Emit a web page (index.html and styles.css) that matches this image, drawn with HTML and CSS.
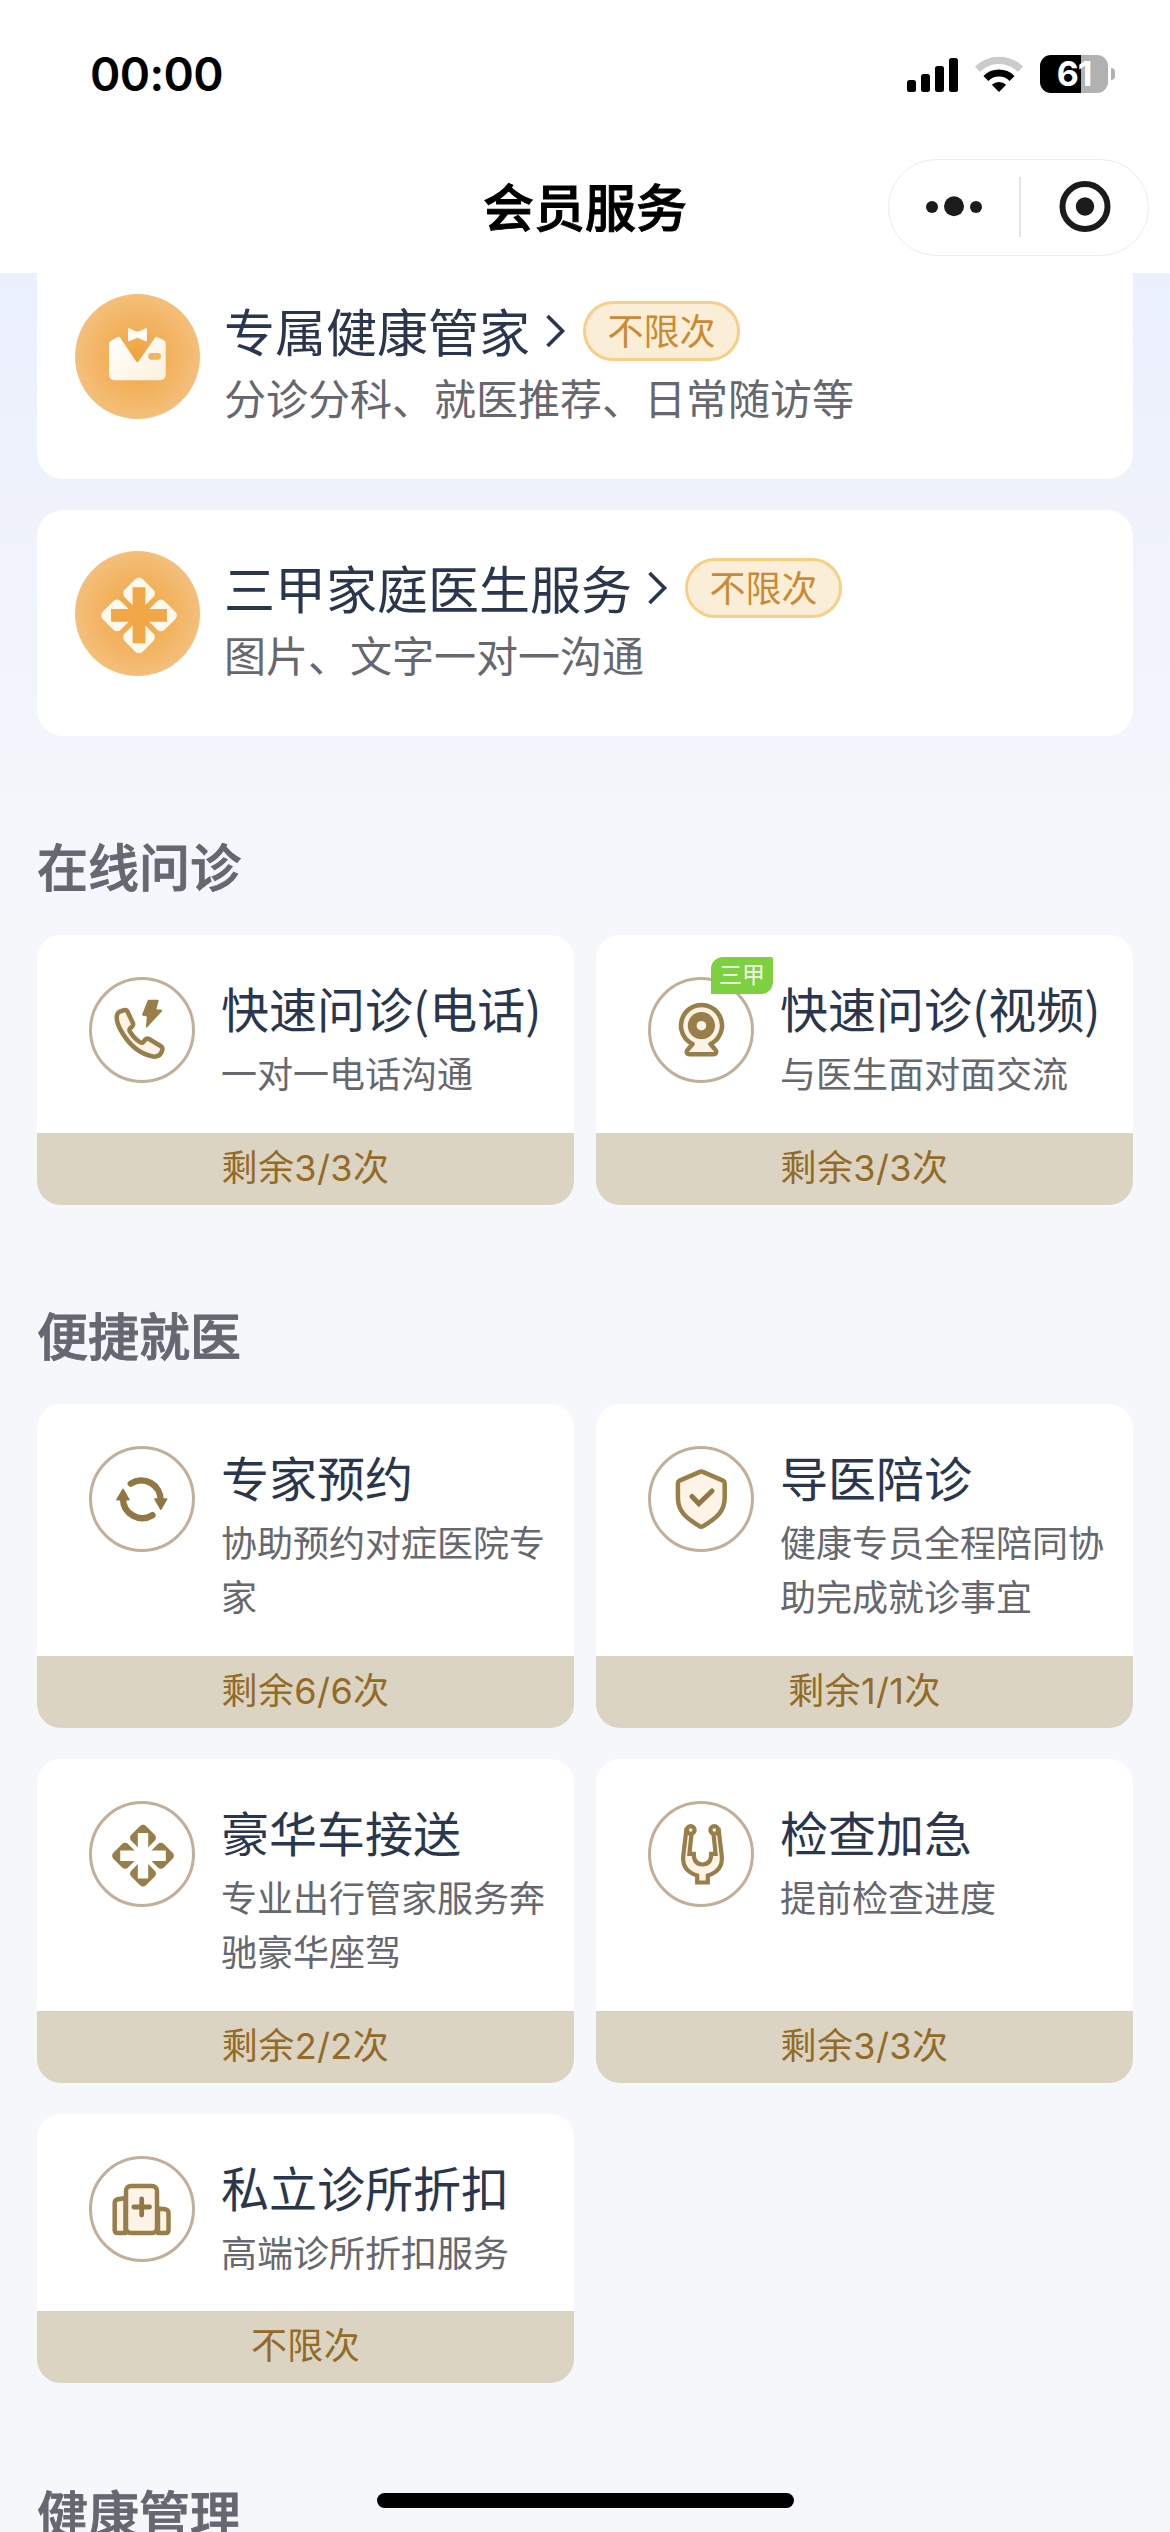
FILE: index.html
```html
<!DOCTYPE html>
<html lang="zh-CN">
<head>
<meta charset="utf-8">
<title>会员服务</title>
<link rel="stylesheet" href="styles.css">
</head>
<body>
<svg class="defs" width="0" height="0" aria-hidden="true">
  <defs>
    <linearGradient id="cream" x1="0" y1="0" x2="1" y2="1">
      <stop offset="0" stop-color="#ffffff"/>
      <stop offset="1" stop-color="#fdf0dc"/>
    </linearGradient>
    <g id="petals">
      <rect x="-10.4" y="-10.4" width="20.8" height="20.8" rx="4.2" transform="translate(0 -17.9) rotate(45)"/>
      <rect x="-10.4" y="-10.4" width="20.8" height="20.8" rx="4.2" transform="translate(0 17.9) rotate(45)"/>
      <rect x="-10.4" y="-10.4" width="20.8" height="20.8" rx="4.2" transform="translate(-17.9 0) rotate(45)"/>
      <rect x="-10.4" y="-10.4" width="20.8" height="20.8" rx="4.2" transform="translate(17.9 0) rotate(45)"/>
    </g>
    <path id="cross" d="M-5.2-22.8H5.2V-5.2H22.8V5.2H5.2V22.8H-5.2V5.2H-22.8V-5.2H-5.2Z"/>
    <radialGradient id="amber">
      <stop offset="0" stop-color="#f0a33d"/>
      <stop offset="1" stop-color="#f4bf7b"/>
    </radialGradient>
  </defs>
</svg>
<div class="page">
  <header class="header">
    <div class="status">
      <span class="time">00:00</span>
      <div class="status-icons">
        <svg width="51" height="36" viewBox="0 0 51 36">
          <rect x="0" y="24" width="9" height="12" rx="2.5"/>
          <rect x="14" y="18" width="9" height="18" rx="2.5"/>
          <rect x="28" y="10" width="9" height="26" rx="2.5"/>
          <rect x="42" y="2" width="9" height="34" rx="2.5"/>
        </svg>
        <svg width="48" height="36" viewBox="0 0 48 36">
          <path d="M2.5 13.2A30.5 30.5 0 0 1 45.5 13.2" fill="none" stroke="#cbcbcb" stroke-width="7.4"/>
          <path d="M10.9 22.4A18.6 18.6 0 0 1 37.1 22.4" fill="none" stroke="#000" stroke-width="7"/>
          <path d="M24 36L16.8 28.8A10.4 10.4 0 0 1 31.2 28.8Z"/>
        </svg>
        <div class="battery">
          <div class="battery-body">61</div>
          <div class="battery-cap"></div>
        </div>
      </div>
    </div>
    <div class="nav">
      <h1 class="nav-title">会员服务</h1>
      <div class="capsule">
        <svg width="130" height="94" viewBox="0 0 130 94">
          <circle cx="43" cy="47" r="6"/><circle cx="65" cy="46.300" r="10"/><circle cx="87" cy="47" r="6"/>
        </svg>
        <div class="capsule-line"></div>
        <svg width="127" height="94" viewBox="0 0 127 94">
          <circle cx="64" cy="46.500" r="22.500" fill="none" stroke="#1b1b1b" stroke-width="6"/><circle cx="64" cy="46.500" r="9.200"/>
        </svg>
      </div>
    </div>
  </header>

  <main class="content">
    <section class="features">
      <article class="feature">
        <svg class="feature-icon" viewBox="0 0 125 125">
          <circle cx="62.5" cy="62.500" r="62.500" fill="url(#amber)"/>
          <path fill="url(#cream)" d="M34 49.500Q34 47.700 35.600 46.900L42.600 43Q44.200 42.200 45.200 43.700L61 67.300Q62.300 69.200 63.600 67.300L79.900 43.700Q80.900 42.200 82.400 43L89.200 46.600Q90.700 47.400 90.700 49.200V80Q90.700 86.200 84.500 86.200H40.200Q34 86.200 34 80Z"/>
          <rect x="73.300" y="59" width="12.700" height="6.700" rx="3" fill="#f3b45f"/>
          <path fill="#fffaf2" d="M53 35Q53 33.700 54.300 34.200L59.500 36.800Q62.300 38.200 65.300 36.800L70.700 34.200Q72 33.700 72 35V46.500Q72 47.900 70.700 47.300L65.300 44.900Q62.300 43.300 59.500 44.900L54.300 47.300Q53 47.900 53 46.500Z"/>
        </svg>
        <div class="feature-text">
          <div class="feature-head">
            <h2 class="feature-title">专属健康管家</h2>
            <svg class="chevron" viewBox="0 0 21 34"><path d="M2.500 2L17.500 17L2.500 32" fill="none" stroke="#2a364d" stroke-width="3.600"/></svg>
            <span class="pill">不限次</span>
          </div>
          <p class="feature-desc">分诊分科、就医推荐、日常随访等</p>
        </div>
      </article>
      <article class="feature">
        <svg class="feature-icon" viewBox="0 0 125 125">
          <circle cx="62.500" cy="62.500" r="62.500" fill="url(#amber)"/>
          <g transform="translate(64 64.300) scale(1.227)">
            <use href="#petals" fill="#fff8ec"/>
            <use href="#cross" fill="#f1a745"/>
          </g>
        </svg>
        <div class="feature-text">
          <div class="feature-head">
            <h2 class="feature-title">三甲家庭医生服务</h2>
            <svg class="chevron" viewBox="0 0 21 34"><path d="M2.500 2L17.500 17L2.500 32" fill="none" stroke="#2a364d" stroke-width="3.600"/></svg>
            <span class="pill">不限次</span>
          </div>
          <p class="feature-desc">图片、文字一对一沟通</p>
        </div>
      </article>
    </section>

    <h2 class="section-title">在线问诊</h2>
    <section class="grid consult">
      <article class="card">
        <div class="card-body">
          <div class="ring">
            <svg viewBox="0 0 106 106">
              <path class="solid" d="M60 22.700H68.600Q70 22.700 69.600 24L67.300 32.300L72.300 32.700Q73.800 33 73 34.200L58.200 50.300Q57 51.300 57 49.800L57.800 39.600L54 38.800Q52.800 38.500 53.200 37.300L58.600 23.600Z"/>
              <path class="line" d="M31 34.500L35 33.200Q37.600 32.600 38.700 35L43.900 46Q44.600 48 43.300 49.300L41 51.500Q40 52.700 40.800 54.300Q45 61.500 51.500 65.400Q53 66.300 54.200 65.100L56.300 62.500Q58 61 60 62L72 69.200Q73.900 70.500 73.300 72.700L72 76.300Q69.500 80 64.500 79.600C52.500 77.500 41.500 69 34 57C29.500 50 27.500 43.500 27.700 39.500Q28.200 35.600 31 34.500Z"/>
            </svg>
          </div>
          <div class="card-text">
            <h3 class="card-title">快速问诊(电话)</h3>
            <p class="card-desc">一对一电话沟通</p>
          </div>
        </div>
        <div class="card-foot">剩余3/3次</div>
      </article>
      <article class="card">
        <div class="card-body">
          <div class="ring">
            <svg viewBox="0 0 106 106">
              <path class="line" d="M44.500 67L39 73.600Q38 77.200 41.500 77.200H65.500Q69 77.200 68 73.600L62.500 67A20.500 20.500 0 1 0 44.500 67Z"/>
              <circle class="solid" cx="53.400" cy="48.700" r="13.600"/>
              <circle cx="53.400" cy="48.700" r="4.800" fill="#fdf3e7"/>
            </svg>
            <span class="tag">三甲</span>
          </div>
          <div class="card-text">
            <h3 class="card-title">快速问诊(视频)</h3>
            <p class="card-desc">与医生面对面交流</p>
          </div>
        </div>
        <div class="card-foot">剩余3/3次</div>
      </article>
    </section>

    <h2 class="section-title">便捷就医</h2>
    <section class="grid visit">
      <article class="card">
        <div class="card-body">
          <div class="ring">
            <svg viewBox="0 0 106 106">
              <path d="M41.800 37.600A19.300 19.300 0 0 1 71.600 54" fill="none" stroke="#907743" stroke-width="6.400" stroke-linecap="round"/>
              <path d="M63.400 69.200A19.300 19.300 0 0 1 34 53" fill="none" stroke="#907743" stroke-width="6.400" stroke-linecap="round"/>
              <path d="M66 53H77.600L71.800 63.200ZM28 53.700H39.800L34 43.300Z" fill="#907743" stroke="#907743" stroke-width="1.600" stroke-linejoin="round"/>
            </svg>
          </div>
          <div class="card-text">
            <h3 class="card-title">专家预约</h3>
            <p class="card-desc">协助预约对症医院专家</p>
          </div>
        </div>
        <div class="card-foot">剩余6/6次</div>
      </article>
      <article class="card">
        <div class="card-body">
          <div class="ring">
            <svg viewBox="0 0 106 106">
              <path class="line" d="M51.800 25.900Q53.300 25 54.800 25.900L75 34.600Q76.700 35.500 76.700 37.300V51.500C76.700 65 69.500 71.500 55.200 80.200Q53.300 81.300 51.500 80.200C37.200 71.500 29.900 65 29.900 51.500V37.300Q29.900 35.500 31.600 34.600Z"/>
              <path d="M44 50.500L50.800 57.800L64 45" fill="none" stroke="#907743" stroke-width="5" stroke-linecap="round"/>
            </svg>
          </div>
          <div class="card-text">
            <h3 class="card-title">导医陪诊</h3>
            <p class="card-desc">健康专员全程陪同协助完成就诊事宜</p>
          </div>
        </div>
        <div class="card-foot">剩余1/1次</div>
      </article>
      <article class="card">
        <div class="card-body">
          <div class="ring">
            <svg viewBox="0 0 106 106">
              <g transform="translate(54 54.700)">
                <use href="#petals" fill="#987f49"/>
                <use href="#cross" fill="#fff"/>
              </g>
            </svg>
          </div>
          <div class="card-text">
            <h3 class="card-title">豪华车接送</h3>
            <p class="card-desc">专业出行管家服务奔驰豪华座驾</p>
          </div>
        </div>
        <div class="card-foot">剩余2/2次</div>
      </article>
      <article class="card">
        <div class="card-body">
          <div class="ring">
            <svg viewBox="0 0 106 106">
              <path class="line stetho" d="M38.200 30L35.200 55.500C34.300 67 41 72 49.200 74.500V81.500H59.800V74.500C68 72 74.700 67 73.800 55.500L70.800 30L65.500 33L67.600 52.800H63.200C63.200 60.700 60 63.500 54.500 63.500C49 63.500 45.800 60.700 45.800 52.800H41.400L43.500 33Z"/>
              <circle class="line stetho" cx="42.700" cy="29" r="3.900"/>
              <circle class="line stetho" cx="66.300" cy="29" r="3.900"/>
            </svg>
          </div>
          <div class="card-text">
            <h3 class="card-title">检查加急</h3>
            <p class="card-desc">提前检查进度</p>
          </div>
        </div>
        <div class="card-foot">剩余3/3次</div>
      </article>
      <article class="card">
        <div class="card-body">
          <div class="ring">
            <svg viewBox="0 0 106 106">
              <path class="line" d="M36.500 42L29 43.200Q25.700 44 25.700 47V74Q25.700 77 28.700 77H36.500Z"/>
              <path class="line" d="M69 52.500L76 53.300Q79.500 54 79.500 57V74Q79.500 77 76.500 77H69Z"/>
              <rect class="line" x="37" y="30" width="31" height="47" rx="5"/>
              <path d="M44.800 51H60.600M52.700 43V59" stroke="#907743" stroke-width="4.800" stroke-linecap="round"/>
            </svg>
          </div>
          <div class="card-text">
            <h3 class="card-title">私立诊所折扣</h3>
            <p class="card-desc">高端诊所折扣服务</p>
          </div>
        </div>
        <div class="card-foot">不限次</div>
      </article>
    </section>

    <h2 class="section-title">健康管理</h2>
  </main>
  <div class="home-bar"></div>
</div>
</body>
</html>
```
FILE: styles.css
```css
* {
  box-sizing: border-box;
  margin: 0;
  padding: 0;
}

body {
  font-family: "Noto Sans CJK SC", sans-serif;
  font-weight: 400;
  background: #f5f7fb;
}

svg {
  display: block;
  flex: none;
}

.defs {
  position: absolute;
}

.page {
  position: relative;
  width: 1170px;
  height: 2532px;
  overflow: hidden;
  display: flex;
  flex-direction: column;
}

/* Status bar and navigation */
.header {
  flex: none;
  height: 273px;
  background: #fff;
}

.status {
  height: 148px;
  padding: 0 55px 0 90px;
  display: flex;
  align-items: center;
  justify-content: space-between;
}

.time {
  font-family: Inter, sans-serif;
  font-size: 46px;
  font-weight: 600;
  line-height: 60px;
  letter-spacing: -0.6px;
}

.status-icons {
  display: flex;
  align-items: center;
  gap: 17px;
}

.battery {
  display: flex;
  align-items: center;
  gap: 3px;
}

.battery-body {
  width: 68px;
  height: 38px;
  border-radius: 11px;
  background: linear-gradient(90deg, #000 41px, #b1b1b1 41px);
  color: #fff;
  font-family: Inter, sans-serif;
  font-size: 34px;
  font-weight: 700;
  line-height: 38px;
  letter-spacing: -1px;
  text-align: center;
}

.battery-cap {
  width: 4px;
  height: 12px;
  border-radius: 0 5px 5px 0;
  background: #b1b1b1;
}

.nav {
  height: 118px;
  display: grid;
  grid-template-columns: 1fr auto 1fr;
  align-items: center;
}

.nav-title {
  grid-column: 2;
  padding-bottom: 4px;
  font-size: 51px;
  font-weight: 500;
  line-height: 72px;
  -webkit-text-stroke: 0.9px #000;
}

.capsule {
  justify-self: end;
  width: 261px;
  height: 97px;
  margin-right: 21px;
  border: 1px solid #ececec;
  border-radius: 49px;
  display: flex;
  align-items: center;
  fill: #1b1b1b;
}

.capsule-line {
  width: 2px;
  height: 60px;
  background: #e5e5e5;
}

/* Scrolled content */
.content {
  flex: 1;
  min-height: 0;
  padding: 0 37px;
  overflow: hidden;
  background: linear-gradient(#ebf0fe, #f0f3fb 280px, #f5f7fb 640px);
}

.features {
  margin-top: -20px;
  display: flex;
  flex-direction: column;
  gap: 31px;
}

.feature {
  height: 226px;
  padding: 41px 38px 0;
  border-radius: 26px;
  background: #fff;
  display: flex;
  gap: 24px;
}

.feature-icon {
  width: 125px;
  height: 125px;
}

.feature-text {
  padding-top: 7px;
}

.feature-head {
  height: 60px;
  display: flex;
  align-items: center;
}

.feature-title {
  padding-bottom: 3px;
  font-size: 51px;
  font-weight: 400;
  line-height: 60px;
  color: #2a364d;
}

.chevron {
  width: 21px;
  height: 34px;
  margin: 0 17px 0 15px;
}

.pill {
  width: 157px;
  height: 60px;
  border: 3px solid #f8cf85;
  border-radius: 30px;
  background: #fbeed8;
  color: #cb8a31;
  font-size: 36px;
  line-height: 51px;
  text-align: center;
}

.feature-desc {
  margin-top: 7px;
  font-size: 42px;
  line-height: 58px;
  color: #66676f;
}

.section-title {
  margin-top: 93px;
  font-size: 51px;
  font-weight: 500;
  line-height: 72px;
  color: #656771;
  -webkit-text-stroke: 0.9px #656771;
}

.grid {
  margin-top: 34px;
  display: grid;
  grid-template-columns: 537px 537px;
  gap: 31px 22px;
}

.consult {
  grid-template-rows: 270px;
}

.visit {
  grid-template-rows: 324px 324px 269px;
}

.card {
  border-radius: 24px;
  background: #fff;
  overflow: hidden;
  display: flex;
  flex-direction: column;
}

.card-body {
  flex: 1;
  padding: 42px 26px 0 52px;
  display: flex;
  gap: 26px;
}

.ring {
  position: relative;
  flex: none;
  width: 106px;
  height: 106px;
  border: 3px solid #c3ae99;
  border-radius: 50%;
}

.ring svg {
  width: 106px;
  height: 106px;
  margin: -3px;
}

.line {
  fill: #fdf3e7;
  stroke: #987f49;
  stroke-width: 4.5;
  stroke-linejoin: round;
}

.stetho {
  stroke-width: 4.2;
  stroke-linejoin: miter;
}

.solid {
  fill: #987f49;
}

.tag {
  position: absolute;
  left: 60px;
  top: -23px;
  width: 62px;
  height: 37px;
  border-radius: 12px 2px 12px 0;
  background: #7dd03f;
  color: #f1fbe9;
  font-size: 23px;
  line-height: 33px;
  text-align: center;
}

.card-text {
  padding-top: 3px;
}

.card-title {
  font-size: 48px;
  font-weight: 400;
  line-height: 54px;
  color: #2a364d;
  white-space: nowrap;
}

.card-desc {
  margin-top: 11px;
  font-size: 36px;
  line-height: 54px;
  color: #66676f;
}

.card-foot {
  flex: none;
  height: 72px;
  background: #dbd4c2;
  color: #936a26;
  font-family: Inter, "Noto Sans CJK SC", sans-serif;
  font-size: 36px;
  line-height: 71px;
  letter-spacing: 0.4px;
  text-align: center;
}

.home-bar {
  position: absolute;
  left: 377px;
  bottom: 24px;
  width: 417px;
  height: 15px;
  border-radius: 8px;
  background: #000;
}
```
